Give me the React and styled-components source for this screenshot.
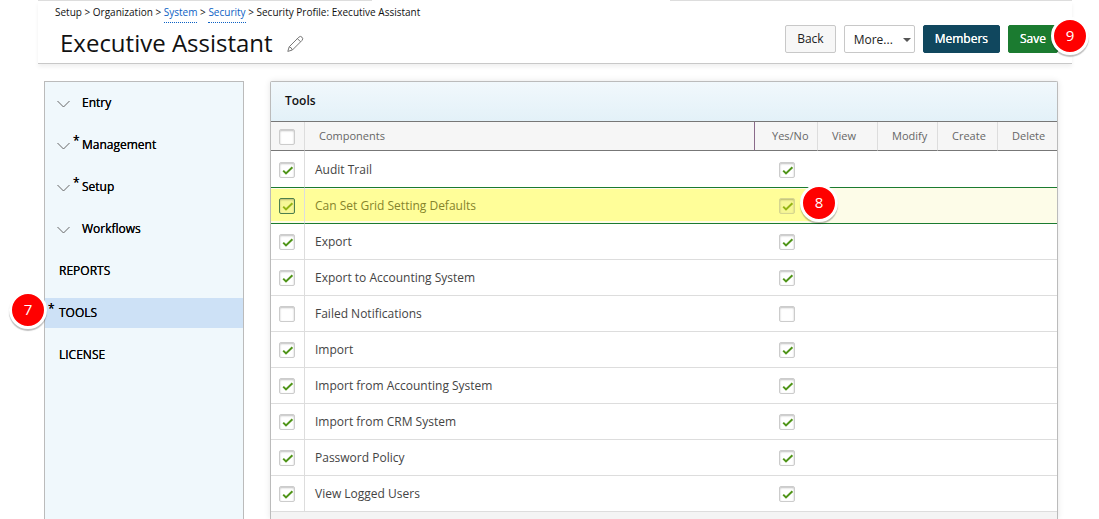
import React from "react";
import styled, { createGlobalStyle } from "styled-components";

const sections = [
  { label: "Entry", group: true },
  { label: "Management", group: true, starred: true },
  { label: "Setup", group: true, starred: true },
  { label: "Workflows", group: true },
  { label: "REPORTS" },
  { label: "TOOLS", starred: true, active: true, step: 7 },
  { label: "LICENSE" }
];

const components = [
  { name: "Audit Trail", on: true, ruled: true },
  { name: "Can Set Grid Setting Defaults", on: true, ruled: true, current: true, step: 8 },
  { name: "Export", on: true },
  { name: "Export to Accounting System", on: true },
  { name: "Failed Notifications", on: false },
  { name: "Import", on: true },
  { name: "Import from Accounting System", on: true },
  { name: "Import from CRM System", on: true },
  { name: "Password Policy", on: true },
  { name: "View Logged Users", on: true }
];

const Tick = ({ label, checked, current, dim }) => (
  <TickWrap>
    <TickBox
      type="checkbox"
      aria-label={label}
      defaultChecked={checked}
      $current={current}
      $dim={dim}
    />
    <TickMark viewBox="0 0 16 16" $bright={current || dim}>
      <path d="M4.2 8.6 L7 11.4 L13.4 5.2" />
    </TickMark>
  </TickWrap>
);

const App = () => (
  <Page>
    <GlobalStyle />
    <TopRule>
      <RuleLeft />
      <RuleRight />
    </TopRule>
    <Header>
      <Heading>
        <Crumbs>
          Setup &gt; Organization &gt; <CrumbLink href="#system">System</CrumbLink> &gt;{" "}
          <CrumbLink href="#security">Security</CrumbLink> &gt; Security Profile: Executive
          Assistant
        </Crumbs>
        <TitleRow>
          <Title>Executive Assistant</Title>
          <EditButton aria-label="Edit name">
            <svg width="18" height="18" viewBox="0 0 18 18" fill="none" stroke="#777">
              <path d="M0.8 17.4 L2.2 12.8 L11.8 3.2 Q13.4 1.6 15 3.2 Q16.6 4.8 15 6.4 L5.4 16 Z" />
              <path d="M2.2 12.8 Q4.6 13.4 5.4 16 M10.4 4.6 L13.6 7.8" />
            </svg>
          </EditButton>
        </TitleRow>
      </Heading>
      <Actions>
        <Button>Back</Button>
        <SelectWrap>
          <Select aria-label="More actions" defaultValue="more">
            <option value="more">More...</option>
          </Select>
          <Caret viewBox="0 0 8 4">
            <path d="M0 0 H8 L4 4 Z" />
          </Caret>
        </SelectWrap>
        <Button $color="#10475e">Members</Button>
        <SaveWrap>
          <Button $color="#1b7b30">Save</Button>
          <SaveStep>9</SaveStep>
        </SaveWrap>
      </Actions>
    </Header>

    <Content>
      <Sidebar>
        {sections.map(({ label, group, starred, active, step }) => (
          <SideItem key={label} href={`#${label.toLowerCase()}`} $active={active} $group={group}>
            {group && (
              <Chevron viewBox="0 0 13 8">
                <path d="M0.5 1 L6.5 7 L12.5 1" />
              </Chevron>
            )}
            <Star $wide={!group}>{starred && "*"}</Star>
            {label}
            {step && <SideStep>{step}</SideStep>}
          </SideItem>
        ))}
      </Sidebar>

      <Panel>
        <PanelTitle>Tools</PanelTitle>
        <Table>
          <colgroup>
            <Col $width={34} />
            <col />
            <Col $width={63} />
            <Col $width={60} />
            <Col $width={60} />
            <Col $width={60} />
            <Col $width={59} />
          </colgroup>
          <thead>
            <tr>
              <HeadTick>
                <Tick label="Select all" />
              </HeadTick>
              <HeadCell $resize>Components</HeadCell>
              <YesHead>Yes/No</YesHead>
              <HeadCell>View</HeadCell>
              <HeadCell>Modify</HeadCell>
              <HeadCell>Create</HeadCell>
              <HeadCell>Delete</HeadCell>
            </tr>
          </thead>
          <tbody>
            {components.map(({ name, on, ruled, current, step }) => (
              <Row key={name} $ruled={ruled} $current={current}>
                <TickCell $marked={current}>
                  <Tick label={`Select ${name}`} checked={on} current={current} />
                </TickCell>
                <NameCell $marked={current}>{name}</NameCell>
                <YesCell $marked={current}>
                  <Tick label={`${name} yes or no`} checked={on} dim={current} />
                  {step && <RowStep>{step}</RowStep>}
                </YesCell>
                <Cell />
                <Cell />
                <Cell />
                <Cell />
              </Row>
            ))}
          </tbody>
        </Table>
      </Panel>
    </Content>
  </Page>
);

export default App;

const GlobalStyle = createGlobalStyle`
  * {
    box-sizing: border-box;
  }
  body {
    margin: 0;
    background: #fff;
    color: #111;
    font-family: "Open Sans", sans-serif;
    font-size: 12px;
  }
  button, select {
    font-family: inherit;
    font-size: 12px;
  }
`;

const Page = styled.div`
  min-height: 100vh;
  padding: 0 27px 0 38px;
  display: flex;
  flex-direction: column;
`;

const TopRule = styled.div`
  height: 1px;
  display: flex;
  justify-content: space-between;
`;

const RuleLeft = styled.div`
  width: 334px;
  background: #ddd;
`;

const RuleRight = styled(RuleLeft)`
  width: 402px;
`;

const Header = styled.header`
  height: 63px;
  display: flex;
  justify-content: space-between;
  border-bottom: 1px solid #c8c8c8;
  box-shadow: 0 3px 4px rgba(0, 0, 0, 0.06);
`;

const Heading = styled.div`
  padding: 3px 0 0 17px;
`;

const Crumbs = styled.nav`
  font-size: 10px;
  line-height: 16px;
  white-space: nowrap;
`;

const CrumbLink = styled.a`
  padding-bottom: 3px;
  color: #0b61c4;
  text-decoration: none;
  border-bottom: 1px dotted #0b61c4;
`;

const TitleRow = styled.div`
  padding: 7px 0 0 5px;
  display: flex;
  align-items: center;
  gap: 14px;
`;

const Title = styled.h1`
  margin: 0;
  font-size: 24px;
  font-weight: 400;
  line-height: 32px;
  white-space: nowrap;
`;

const EditButton = styled.button`
  height: 18px;
  padding: 0;
  border: 0;
  background: none;
`;

const Actions = styled.div`
  padding: 24px 14px 0 0;
  display: flex;
  align-items: flex-start;
  gap: 8px;
`;

const Button = styled.button`
  height: 28px;
  padding: 0 11px 1px;
  border: 1px solid ${props => props.$color || "#c8c8c8"};
  border-radius: 2px;
  background: ${props => props.$color || "#f7f7f7"};
  color: ${props => (props.$color ? "#fff" : "#222")};
  text-shadow: ${props => (props.$color ? "0 0 0 #fff" : "none")};
`;

const SelectWrap = styled.div`
  display: grid;
  align-items: center;
`;

const Select = styled.select`
  grid-area: 1 / 1;
  width: 71px;
  height: 28px;
  padding: 0 0 0 9px;
  appearance: none;
  border: 1px solid #c8c8c8;
  border-radius: 2px;
  background: #fff;
  color: #222;
`;

const Caret = styled.svg`
  grid-area: 1 / 1;
  justify-self: end;
  width: 8px;
  height: 4px;
  margin: 2px 4px 0 0;
  fill: #555;
  pointer-events: none;
`;

const SaveWrap = styled.div`
  position: relative;
`;

const Step = styled.span`
  position: absolute;
  z-index: 1;
  width: 38px;
  height: 38px;
  border: 3px solid #fff;
  border-radius: 50%;
  background: #f00;
  box-shadow: 0 2px 1px rgba(0, 0, 0, 0.25);
  color: #fff;
  font-size: 15px;
  font-weight: 400;
  line-height: 31px;
  text-align: center;
  text-shadow: none;
`;

const SaveStep = styled(Step)`
  top: -8px;
  right: -31px;
`;

const SideStep = styled(Step)`
  top: -7px;
  left: -36px;
`;

const RowStep = styled(Step)`
  top: -4px;
  right: -20px;
`;

const Content = styled.div`
  flex: 1;
  padding: 17px 14px 0 6px;
  display: flex;
  gap: 26px;
`;

const Sidebar = styled.nav`
  width: 200px;
  flex-shrink: 0;
  padding-top: 6px;
  display: flex;
  flex-direction: column;
  gap: 12px;
  border: 1px solid #bbb;
  border-bottom: 0;
  background: #f0f8fc;
`;

const SideItem = styled.a`
  position: relative;
  height: 30px;
  padding: 0 0 1px ${props => (props.$group ? 12 : 3)}px;
  display: flex;
  align-items: center;
  background: ${props => (props.$active ? "#cde1f6" : "none")};
  color: #000;
  text-decoration: none;
  text-shadow: 0 0 0 #000;
`;

const Chevron = styled.svg`
  width: 13px;
  height: 8px;
  margin: 2px 3px 0 0;
  fill: none;
  stroke: #666;
`;

const Star = styled.span`
  width: ${props => (props.$wide ? 11 : 9)}px;
  padding-bottom: 8px;
  font-size: 12px;
`;

const Panel = styled.section`
  flex: 1;
  border: 1px solid #bbb;
  border-bottom: 0;
  border-radius: 2px 2px 0 0;
  background: #f4f4f4;
  box-shadow: 0 0 6px rgba(0, 0, 0, 0.1);
`;

const PanelTitle = styled.h2`
  height: 40px;
  margin: 0;
  padding-left: 14px;
  border-bottom: 1px solid #777;
  background: linear-gradient(#f1f8fc, #e3f1f8);
  font-size: 12px;
  font-weight: 600;
  line-height: 38px;
`;

const Table = styled.table`
  width: 100%;
  table-layout: fixed;
  border-collapse: separate;
  border-spacing: 0;
`;

const Col = styled.col`
  width: ${props => props.$width}px;
`;

const HeadCell = styled.th`
  height: 29px;
  padding: 0 0 2px 14px;
  border-right: 1px solid ${props => (props.$resize ? "#8a6a8a" : "#ddd")};
  border-bottom: 1px solid #777;
  background: #f6f6f6;
  color: #666;
  font-size: 11px;
  font-weight: 400;
  text-align: left;

  &:last-child {
    border-right: 0;
  }
`;

const HeadTick = styled(HeadCell)`
  padding: 2px 0 0 8px;
`;

const YesHead = styled(HeadCell)`
  padding-left: 17px;
`;

const Row = styled.tr`
  background: ${props => (props.$current ? "#fdfce8" : "#fff")};

  td {
    border-bottom-color: ${props => (props.$ruled ? "#1b7b30" : "#ddd")};
  }

  &:first-child td {
    height: 37px;
    padding-top: 1px;
  }
`;

const Cell = styled.td`
  height: 36px;
  padding: 0;
  border-bottom: 1px solid #ddd;
  background: ${props =>
    props.$marked
      ? "linear-gradient(transparent 1px, #fffe99 1px calc(100% - 2px), transparent calc(100% - 2px))"
      : "none"};
`;

const TickCell = styled(Cell)`
  padding: 0 0 0 8px;
  border-right: 1px solid #ddd;
`;

const NameCell = styled(Cell)`
  padding: 0 0 0 10px;
  color: ${props => (props.$marked ? "#85842c" : "#444")};
`;

const YesCell = styled(Cell)`
  position: relative;
  padding: 0 0 0 24px;
`;

const TickWrap = styled.span`
  width: 16px;
  height: 16px;
  display: grid;
`;

const TickBox = styled.input`
  grid-area: 1 / 1;
  width: 16px;
  height: 16px;
  margin: 0;
  appearance: none;
  border: 1px solid ${props => (props.$current ? "#4d7f4d" : props.$dim ? "#d6d690" : "#ccc")};
  border-radius: 2px;
  background: ${props => (props.$current || props.$dim ? "#f7f796" : "#fff")};
  box-shadow: inset 0 1px 2px rgba(0, 0, 0, 0.25);

  &:not(:checked) + svg {
    visibility: hidden;
  }
`;

const TickMark = styled.svg`
  grid-area: 1 / 1;
  width: 16px;
  height: 16px;
  fill: none;
  stroke: ${props => (props.$bright ? "#94b414" : "#4f9418")};
  stroke-width: 2;
  pointer-events: none;
`;
